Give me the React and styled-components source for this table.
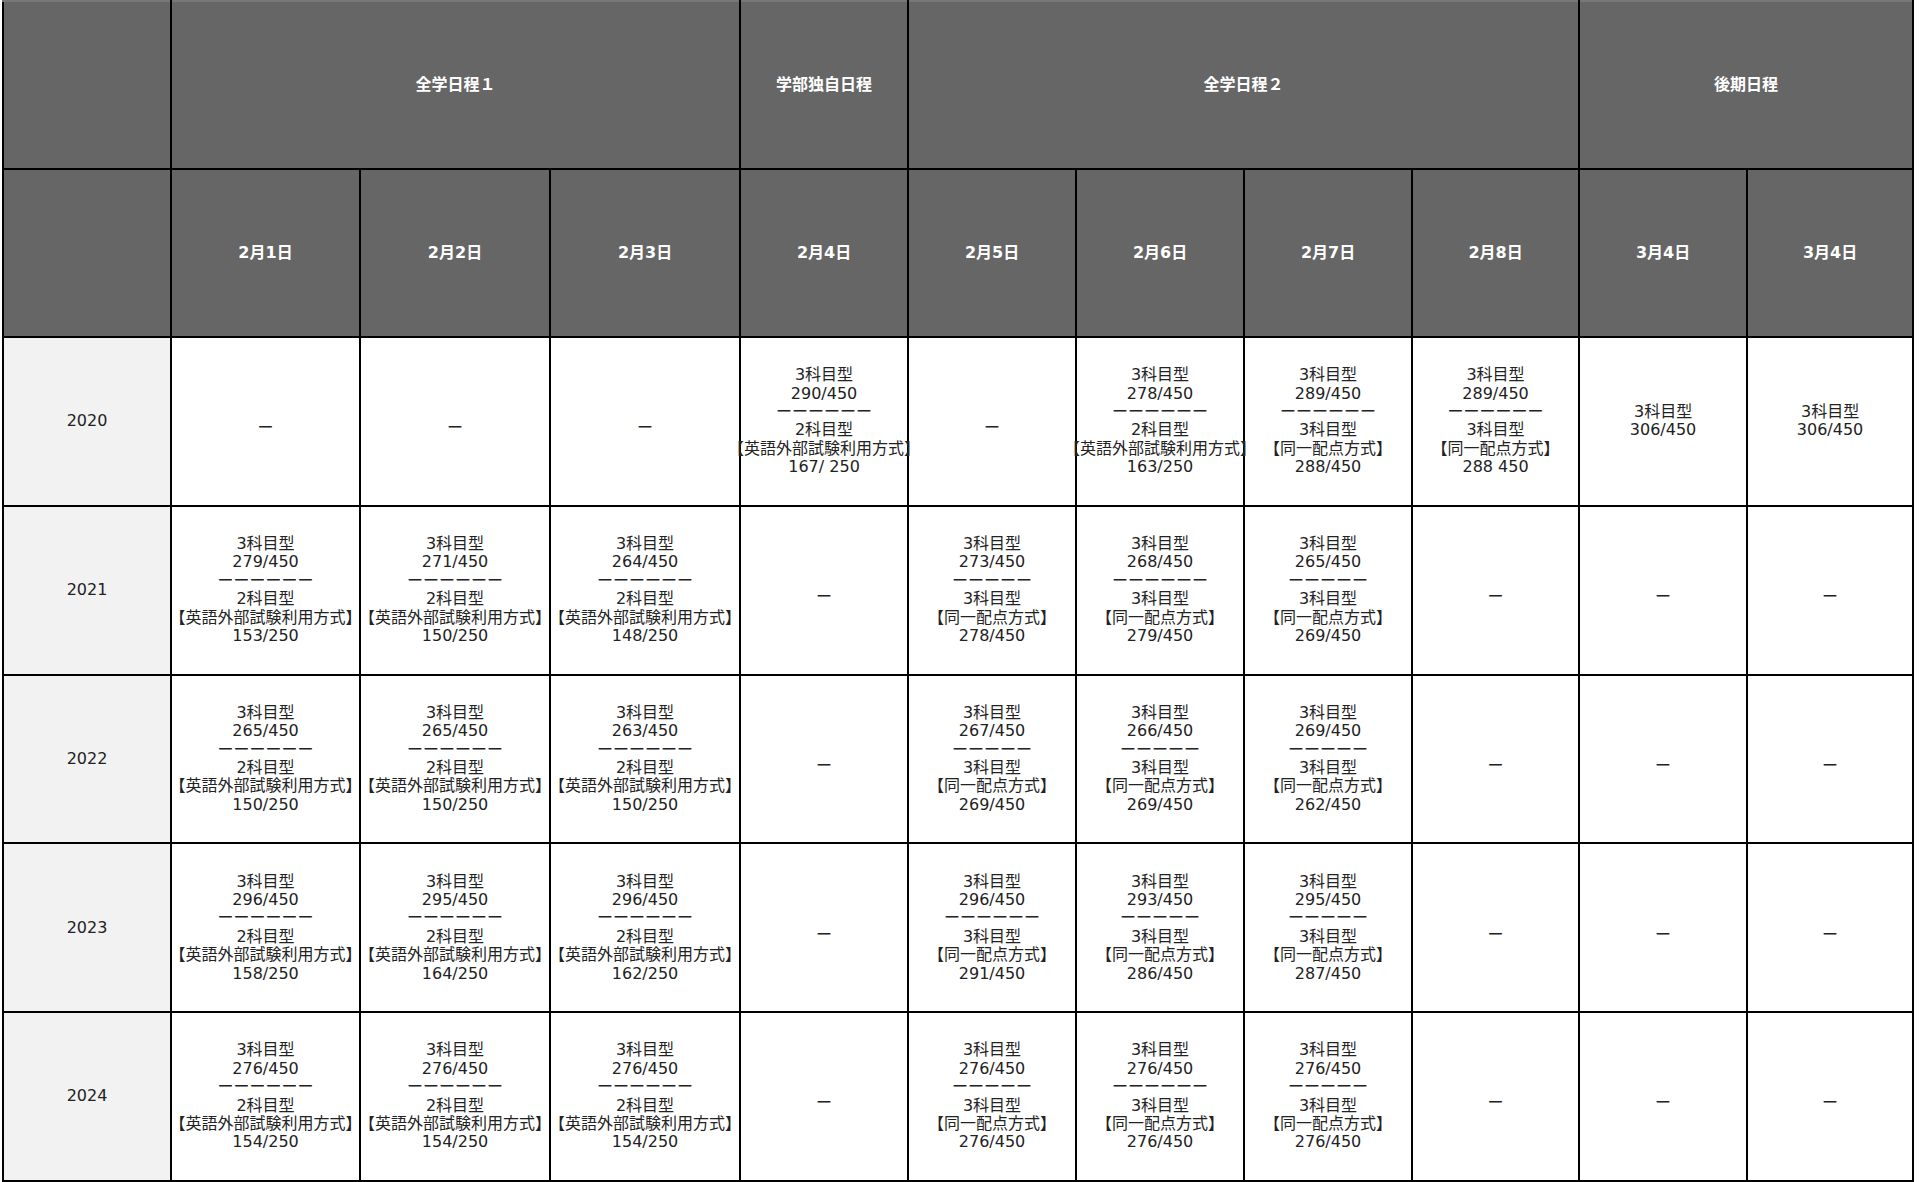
import React from 'react'
import styled, { createGlobalStyle } from 'styled-components'

const GlobalStyle = createGlobalStyle`
  html, body {
    margin: 0;
    background: #fff;
  }
  body {
    font-family: "DejaVu Sans", "Noto Sans CJK JP", sans-serif;
  }
`

const Wrapper = styled.div`
  padding-left: 2px;
`

const Table = styled.table`
  width: 1910px;
  height: 1182px;
  table-layout: fixed;
  border-collapse: collapse;
  font-size: 16px;
  line-height: 1.15;
  color: #222;
`

const Col = styled.col`
  width: ${p => p.$w}px;
`

const Row = styled.tr`
  height: 168px;
`

const HeadCell = styled.th`
  background: #666;
  color: #fff;
  font-weight: 700;
  text-align: center;
  vertical-align: middle;
  padding: 0;
  border: 2px solid #000;
  ${p => p.$top && 'border-top-color: #777;'}
`

const YearCell = styled.th`
  background: #f2f2f2;
  color: #222;
  font-weight: 400;
  text-align: center;
  vertical-align: middle;
  padding: 0;
  border: 2px solid #000;
`

const Cell = styled.td`
  background: #fff;
  vertical-align: middle;
  padding: ${p => (p.$empty ? '14px 0 0' : '0')};
  border: 2px solid #000;
`

const Lines = styled.div`
  display: flex;
  flex-direction: column;
  align-items: center;
  white-space: nowrap;
`

const groups = [
  { label: '', span: 1 },
  { label: '全学日程１', span: 3 },
  { label: '学部独自日程', span: 1 },
  { label: '全学日程２', span: 4 },
  { label: '後期日程', span: 2 },
]

const dates = ['2月1日', '2月2日', '2月3日', '2月4日', '2月5日', '2月6日', '2月7日', '2月8日', '3月4日', '3月4日']

const widths = [168, 189, 190, 190, 168, 168, 168, 168, 167, 168, 166]

const eng = (a, b, sep = 6) => ({ type: 'eng', a, b, sep })
const same = (a, b, sep = 5) => ({ type: 'same', a, b, sep })
const only = a => ({ type: 'only', a })

const rows = [
  {
    year: '2020',
    cells: [null, null, null, eng('290/450', '167/ 250'), null, eng('278/450', '163/250'), same('289/450', '288/450', 6), same('289/450', '288 450', 6), only('306/450'), only('306/450')],
  },
  {
    year: '2021',
    cells: [eng('279/450', '153/250'), eng('271/450', '150/250'), eng('264/450', '148/250'), null, same('273/450', '278/450'), same('268/450', '279/450', 6), same('265/450', '269/450'), null, null, null],
  },
  {
    year: '2022',
    cells: [eng('265/450', '150/250'), eng('265/450', '150/250'), eng('263/450', '150/250'), null, same('267/450', '269/450'), same('266/450', '269/450'), same('269/450', '262/450'), null, null, null],
  },
  {
    year: '2023',
    cells: [eng('296/450', '158/250'), eng('295/450', '164/250'), eng('296/450', '162/250'), null, same('296/450', '291/450', 6), same('293/450', '286/450'), same('295/450', '287/450'), null, null, null],
  },
  {
    year: '2024',
    cells: [eng('276/450', '154/250'), eng('276/450', '154/250'), eng('276/450', '154/250'), null, same('276/450', '276/450'), same('276/450', '276/450', 6), same('276/450', '276/450'), null, null, null],
  },
]

const linesFor = cell => {
  if (cell.type === 'only') return ['3科目型', cell.a]
  const second = cell.type === 'eng' ? ['2科目型', '【英語外部試験利用方式】'] : ['3科目型', '【同一配点方式】']
  return ['3科目型', cell.a, 'ー'.repeat(cell.sep), ...second, cell.b]
}

const ScoreCell = ({ cell }) => {
  if (!cell) {
    return (
      <Cell $empty>
        <Lines>ー</Lines>
      </Cell>
    )
  }

  return (
    <Cell>
      <Lines>
        {linesFor(cell).map((line, i) => (
          <span key={i}>{line}</span>
        ))}
      </Lines>
    </Cell>
  )
}

const App = () => (
  <Wrapper>
    <GlobalStyle />
    <Table>
      <colgroup>
        {widths.map((w, i) => (
          <Col key={i} $w={w} />
        ))}
      </colgroup>
      <thead>
        <Row>
          {groups.map((g, i) => (
            <HeadCell key={i} colSpan={g.span} $top>
              {g.label}
            </HeadCell>
          ))}
        </Row>
        <Row>
          <HeadCell />
          {dates.map((d, i) => (
            <HeadCell key={i}>{d}</HeadCell>
          ))}
        </Row>
      </thead>
      <tbody>
        {rows.map(row => (
          <Row key={row.year}>
            <YearCell>{row.year}</YearCell>
            {row.cells.map((cell, i) => (
              <ScoreCell key={i} cell={cell} />
            ))}
          </Row>
        ))}
      </tbody>
    </Table>
  </Wrapper>
)

export default App
